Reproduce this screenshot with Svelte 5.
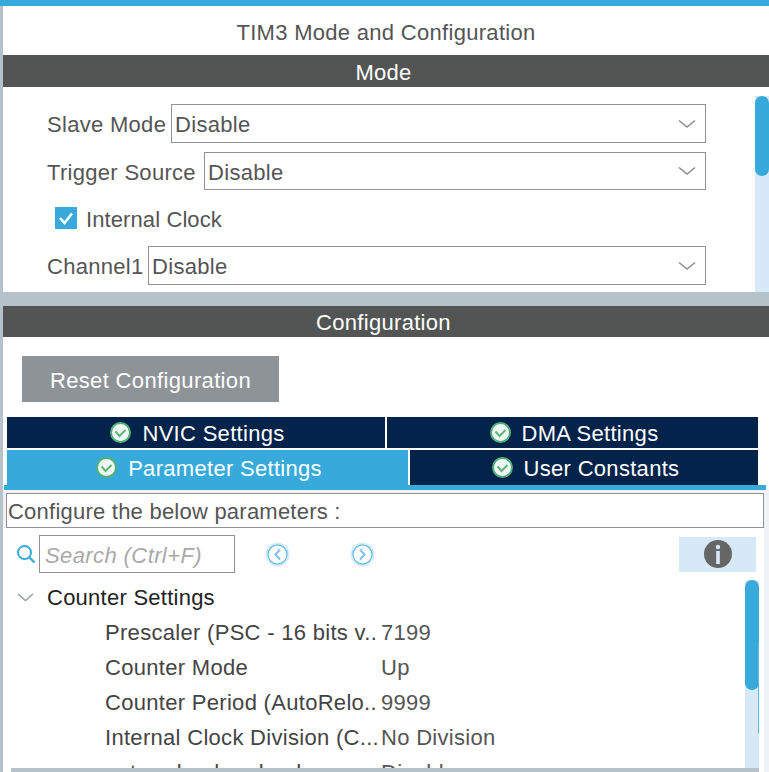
<script>
    const selects = [
        { label: "Slave Mode", value: "Disable", labelWidth: 118 },
        { label: "Trigger Source", value: "Disable", labelWidth: 151 },
    ];

    const params = [
        { label: "Prescaler (PSC - 16 bits v..", value: "7199" },
        { label: "Counter Mode", value: "Up" },
        { label: "Counter Period (AutoRelo..", value: "9999" },
        { label: "Internal Clock Division (C...", value: "No Division" },
        { label: "auto-reload preload", value: "Disable" },
    ];
</script>

{#snippet chevron()}
    <svg class="chevron" width="18" height="10" viewBox="0 0 18 10">
        <path d="M1 1.5 L9 8 L17 1.5" fill="none" stroke="#8a8f93" stroke-width="1.6" />
    </svg>
{/snippet}

{#snippet okIcon()}
    <svg class="ok" width="21" height="21" viewBox="0 0 21 21">
        <circle cx="10.5" cy="10.5" r="9.5" fill="#eff7f2" stroke="#4fb07a" stroke-width="2" />
        <path d="M5.5 9.5 L9.5 14 L15.5 8" fill="none" stroke="#5fb47e" stroke-width="2" />
    </svg>
{/snippet}

{#snippet navIcon(d, cls)}
    <svg class="nav {cls}" width="25" height="25" viewBox="0 0 25 25">
        <circle cx="12.5" cy="12.5" r="11.3" fill="none" stroke="#d5ecf7" stroke-width="1.4" />
        <circle cx="12.5" cy="12.5" r="9.6" fill="#fff" stroke="#5cb9e3" stroke-width="1.3" />
        <path {d} fill="none" stroke="#7cc5e8" stroke-width="2" />
    </svg>
{/snippet}

{#snippet selectRow(label, value, labelWidth)}
    <div class="row">
        <span class="label" style="width: {labelWidth}px">{label}</span>
        <div class="select">
            <span class="value">{value}</span>
            {@render chevron()}
        </div>
    </div>
{/snippet}

<div class="page">
    <div class="title">TIM3 Mode and Configuration</div>

    <div class="section-head">Mode</div>
    <div class="mode">
        <div class="mode-form">
            {#each selects as s}
                {@render selectRow(s.label, s.value, s.labelWidth)}
            {/each}
            <div class="check-row">
                <span class="checkbox">
                    <svg width="22" height="22" viewBox="0 0 22 22">
                        <path d="M5 11 L9.5 16 L17 6.5" fill="none" stroke="#fff" stroke-width="2.6" />
                    </svg>
                </span>
                <span class="label check-label">Internal Clock</span>
            </div>
            {@render selectRow("Channel1", "Disable", 95)}
        </div>
        <div class="scroll mode-scroll"><div class="thumb"></div></div>
    </div>

    <div class="section-head config-head">Configuration</div>
    <div class="config">
        <button class="reset">Reset Configuration</button>

        <div class="tabs top-tabs">
            <div class="tab">{@render okIcon()}NVIC Settings</div>
            <div class="tab">{@render okIcon()}DMA Settings</div>
        </div>
        <div class="tabs bottom-tabs">
            <div class="tab active">{@render okIcon()}Parameter Settings</div>
            <div class="tab">{@render okIcon()}User Constants</div>
        </div>
        <div class="tab-line"></div>

        <div class="params-panel">
            <div class="hint-wrap">
                <div class="hint">Configure the below parameters :</div>
            </div>

            <div class="search-row">
                <svg class="lens" width="20" height="20" viewBox="0 0 20 20">
                    <circle cx="8.5" cy="8.5" r="6.5" fill="none" stroke="#38a9db" stroke-width="2" />
                    <path d="M13 13 L18.5 18.5" stroke="#38a9db" stroke-width="2.4" />
                </svg>
                <div class="search">Search (Ctrl+F)</div>
                {@render navIcon("M15 7.5 L10.5 12.5 L15 17.5", "prev")}
                {@render navIcon("M10 7.5 L14.5 12.5 L10 17.5", "next")}
                <div class="info">
                    <svg width="28" height="28" viewBox="0 0 28 28">
                        <circle cx="14" cy="14" r="14" fill="#666" />
                        <circle cx="14" cy="7" r="2.2" fill="#d7e8f6" />
                        <rect x="12.2" y="11" width="3.6" height="13" fill="#d7e8f6" />
                    </svg>
                </div>
            </div>

            <div class="tree-wrap">
                <div class="tree">
                    <div class="group">
                        <svg width="17" height="9" viewBox="0 0 17 9">
                            <path d="M1 1 L8.5 7.5 L16 1" fill="none" stroke="#9a9ea2" stroke-width="1.5" />
                        </svg>
                        <span>Counter Settings</span>
                    </div>
                    {#each params as p}
                        <div class="param">
                            <span class="param-label">{p.label}</span>
                            <span class="param-value">{p.value}</span>
                        </div>
                    {/each}
                </div>
                <div class="scroll tree-scroll"><div class="thumb"></div></div>
            </div>
            <div class="bottom-bar"></div>
        </div>
    </div>
</div>

<style>
    :global(body) {
        margin: 0;
        overflow: hidden;
    }

    .page {
        width: 769px;
        height: 772px;
        box-sizing: border-box;
        display: flex;
        flex-direction: column;
        overflow: hidden;
        border-top: 6px solid #38a9db;
        padding-left: 3px;
        background: #b6c2c9;
        font-family: "Liberation Sans", Arial, sans-serif;
        font-size: 22px;
        letter-spacing: 0.3px;
        color: #555;
    }

    .title {
        height: 49px;
        box-sizing: border-box;
        padding-top: 4px;
        flex: none;
        display: flex;
        align-items: center;
        justify-content: center;
        background: #fff;
    }

    .section-head {
        height: 32px;
        box-sizing: border-box;
        padding: 3px 5px 0 0;
        flex: none;
        display: flex;
        align-items: center;
        justify-content: center;
        background: #535554;
        color: #fff;
    }

    .config-head {
        height: 31px;
        margin-top: 14px;
    }

    .mode {
        height: 205px;
        flex: none;
        display: flex;
        background: #fff;
    }

    .mode-form {
        flex: 1;
        padding: 17px 49px 0 44px;
    }

    .row {
        display: flex;
        align-items: center;
        gap: 6px;
        height: 39px;
        margin-bottom: 9px;
    }

    .row:nth-child(2) {
        height: 38px;
    }

    .label {
        flex: none;
        padding-top: 3px;
        white-space: nowrap;
    }

    .check-label {
        letter-spacing: 0.1px;
    }

    .select {
        flex: 1;
        height: 100%;
        box-sizing: border-box;
        border: 1px solid #8e9398;
        display: flex;
        align-items: center;
        justify-content: space-between;
        padding: 0 9px 0 3px;
    }

    .value {
        padding-top: 3px;
    }

    .check-row {
        display: flex;
        align-items: center;
        gap: 9px;
        height: 38px;
        margin: 0 0 9px 8px;
    }

    .checkbox {
        width: 22px;
        height: 22px;
        background: #38a9db;
    }

    .checkbox svg {
        display: block;
    }

    .scroll {
        width: 14px;
        flex: none;
        background: #d7e8f6;
    }

    .thumb {
        background: #38a9db;
        border-radius: 7px;
    }

    .mode-scroll {
        margin-top: 9px;
    }

    .mode-scroll .thumb {
        height: 80px;
    }

    .config {
        flex: 1;
        min-height: 0;
        display: flex;
        flex-direction: column;
        background: #fff;
    }

    .reset {
        align-self: flex-start;
        width: 257px;
        height: 46px;
        margin: 19px 0 15px 19px;
        padding: 3px 0 0;
        border: none;
        background: #8e9398;
        color: #fff;
        font: inherit;
        letter-spacing: 0.35px;
    }

    .tabs {
        display: grid;
        gap: 2px;
        margin-left: 4px;
        width: 751px;
        flex: none;
    }

    .top-tabs {
        grid-template-columns: 378px 371px;
        height: 31px;
        margin-bottom: 2px;
    }

    .bottom-tabs {
        grid-template-columns: 401px 348px;
        height: 35px;
    }

    .tab {
        display: flex;
        align-items: center;
        justify-content: center;
        gap: 11px;
        box-sizing: border-box;
        padding: 2px 0 0 3px;
        background: #03234b;
        color: #fff;
    }

    .tab.active {
        background: #38a9db;
    }

    .ok {
        flex: none;
        margin-top: -2px;
    }

    .tab-line {
        height: 5px;
        flex: none;
        width: 762px;
        margin-left: 1px;
        background: #38a9db;
    }

    .params-panel {
        flex: 1;
        min-height: 0;
        display: flex;
        flex-direction: column;
        box-sizing: border-box;
        border-right: 5px solid #f0f2f4;
        padding-left: 3px;
        background: #fff;
    }

    .hint-wrap {
        flex: none;
        margin-left: -3px;
        padding: 3px 0 0 3px;
        background: #f0f2f4;
    }

    .hint {
        height: 35px;
        box-sizing: border-box;
        border: 1px solid #8e9398;
        background: #fff;
        display: flex;
        align-items: center;
        padding: 2px 0 0 1px;
        letter-spacing: 0.23px;
    }

    .search-row {
        flex: none;
        height: 38px;
        margin-top: 7px;
        display: flex;
        align-items: center;
    }

    .lens {
        margin-left: 10px;
        margin-right: 3px;
    }

    .search {
        width: 196px;
        height: 38px;
        box-sizing: border-box;
        border: 1px solid #8e9398;
        display: flex;
        align-items: center;
        padding: 3px 0 0 5px;
        color: #a9a9a9;
        font-style: italic;
        letter-spacing: 0.4px;
    }

    .prev {
        margin-left: 30px;
    }

    .next {
        margin-left: 60px;
    }

    .info {
        width: 77px;
        height: 35px;
        margin-left: 304px;
        display: flex;
        align-items: center;
        justify-content: center;
        background: #d7e8f6;
    }

    .tree-wrap {
        flex: 1;
        min-height: 0;
        display: flex;
        margin-top: 7px;
    }

    .tree {
        flex: 1;
        min-width: 0;
        overflow: hidden;
    }

    .group {
        height: 35px;
        display: flex;
        align-items: center;
        gap: 13px;
        padding-left: 11px;
        color: #222;
        letter-spacing: 0.25px;
    }

    .param {
        height: 35px;
        display: flex;
        align-items: center;
        padding-left: 99px;
        color: #444;
    }

    .param-label {
        width: 276px;
        flex: none;
        white-space: nowrap;
        overflow: hidden;
    }

    .param-value {
        color: #555;
    }

    .tree-scroll {
        margin-right: 5px;
        position: relative;
    }

    .tree-scroll .thumb {
        height: 110px;
    }

    /* thin second marker lying over the track */
    .tree-scroll::after {
        content: "";
        position: absolute;
        right: 0;
        top: 62px;
        width: 1px;
        height: 91px;
        background: #5ab8e2;
    }

    .bottom-bar {
        flex: none;
        height: 4px;
        margin: 0 5px 0 5px;
        background: #b6c2c9;
    }
</style>
